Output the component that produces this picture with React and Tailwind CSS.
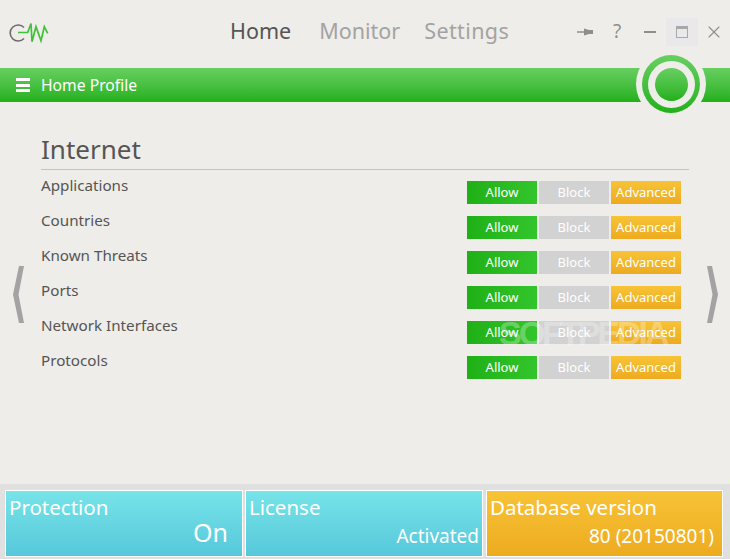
import { X } from "lucide-react";

const rows = [
  "Applications",
  "Countries",
  "Known Threats",
  "Ports",
  "Network Interfaces",
  "Protocols",
];

function Logo() {
  return (
    <svg width="40" height="22" viewBox="0 0 40 22" fill="none">
      <path d="M15 4.5A8 8 0 1 0 15 15.5" stroke="#6b6b6b" strokeWidth="1.6" />
      <path
        d="M9 9.5H18.7L22 0.5L23 18.7L27 3.7L32 17.7L35.3 3.7L38.7 10.3"
        stroke="#3fc23a"
        strokeWidth="1.7"
      />
    </svg>
  );
}

function Chevron({ flip }) {
  return (
    <svg width="12" height="57" viewBox="0 0 12 57" fill="none">
      <path
        d={flip ? "M1 0H6L12 28.5L6 57H1L6.5 28.5Z" : "M11 0H6L0 28.5L6 57H11L5.5 28.5Z"}
        fill="#a3a3a3"
      />
    </svg>
  );
}

function Card({ title, value, valueClass, color }) {
  return (
    <div className={`h-[67px] border border-white flex flex-col text-white ${color}`}>
      <div className="pl-[3px] pt-[3px] text-[20.5px] leading-[27px]">{title}</div>
      <div className={`mt-auto text-right ${valueClass}`}>{value}</div>
    </div>
  );
}

export default function App() {
  return (
    <div className="relative w-[730px] h-[559px] overflow-hidden flex flex-col bg-[#eeede9] font-['Noto_Sans',sans-serif]">
      <div className="h-[68px] flex items-center relative">
        <div className="ml-[9px] flex">
          <Logo />
        </div>
        <div className="ml-[181px] mt-[-6px] flex text-[21.5px] text-[#a3a3a3]">
          <span className="text-[#555555] mr-[28px]">Home</span>
          <span className="mr-[24px]">Monitor</span>
          <span className="tracking-[0.4px]">Settings</span>
        </div>
        <div className="ml-auto mr-[6px] mt-[-5px] flex items-center text-[#8e8e8e]">
          <svg width="17" height="10" viewBox="0 0 17 10" className="mr-[19px]">
            <path d="M0 4.3H7V5.7H0Z M7 1.5L12 3H16V7H12L7 8.5Z" fill="#8e8e8e" />
          </svg>
          <span className="w-[10px] text-[19px] leading-none mr-[21px]">?</span>
          <div className="w-[12px] h-[2px] bg-[#8e8e8e] mr-[10px]"></div>
          <div className="w-[32px] h-[28px] bg-[#e9e9ec] flex items-center justify-center mr-[6px]">
            <div className="w-[12px] h-[12px] border border-[#a8a8a8] border-t-[3px]"></div>
          </div>
          <X size={20} strokeWidth={1.3} />
        </div>
      </div>

      <div className="h-[34px] flex items-center bg-gradient-to-b from-[#66cf60] to-[#20b017] text-white">
        <div className="ml-[16px] mr-[11px] w-[14px] flex flex-col gap-[2.5px]">
          <div className="h-[3px] bg-white"></div>
          <div className="h-[3px] bg-white"></div>
          <div className="h-[3px] bg-white"></div>
        </div>
        <span className="text-[15.7px] pt-[1px]">Home Profile</span>
      </div>

      <div className="flex-1 flex">
        <div className="w-[41px] pl-[13px] pt-[164px]">
          <Chevron />
        </div>
        <div className="w-[648px] pt-[28px]">
          <div className="text-[26px] leading-[38px] h-[40px] text-[#555555] border-b border-[#c3c3cb]">
            Internet
          </div>
          <div className="flex flex-col gap-[12px] pt-[11px]">
            {rows.map((name) => (
              <div key={name} className="h-[23px] flex">
                <span className="text-[15.2px] leading-[8px] text-[#555555]">{name}</span>
                <div className="ml-auto mr-[8px] flex gap-[2px] text-[13px] leading-[23px] text-center text-white">
                  <div className="w-[70px] bg-gradient-to-r from-[#1fb016] to-[#33c52c]">Allow</div>
                  <div className="w-[70px] bg-[#d2d2d2]">Block</div>
                  <div className="w-[70px] bg-gradient-to-b from-[#f8c336] to-[#edab1f]">Advanced</div>
                </div>
              </div>
            ))}
          </div>
        </div>
        <div className="pl-[17px] pt-[164px]">
          <Chevron flip />
        </div>
      </div>

      <div className="h-[75px] bg-[#e0e0e0] pt-[6px] pl-[5px] grid grid-cols-[238px_238px_238px] gap-x-[2px]">
        <Card
          title="Protection"
          value="On"
          valueClass="text-[25px] leading-[22px] pr-[14px] pb-[13px]"
          color="bg-gradient-to-b from-[#76e4e8] to-[#57c8db]"
        />
        <Card
          title="License"
          value="Activated"
          valueClass="text-[19px] leading-[26px] pr-[3px] pb-[7px]"
          color="bg-gradient-to-b from-[#76e4e8] to-[#57c8db]"
        />
        <div className="ml-[1px]">
          <Card
            title="Database version"
            value="80 (20150801)"
            valueClass="text-[19px] leading-[26px] pr-[8px] pb-[7px]"
            color="bg-gradient-to-b from-[#f8c336] to-[#edab1f]"
          />
        </div>
      </div>

      {/* status ring sits over the green bar */}
      <div className="absolute left-[636px] top-[49px] w-[70px] h-[70px] rounded-full bg-[#eeede9] flex items-center justify-center">
        <div className="w-[58px] h-[58px] rounded-full bg-gradient-to-b from-[#66cf60] to-[#20b017] flex items-center justify-center">
          <div className="w-[47px] h-[47px] rounded-full bg-[#eeede9] flex items-center justify-center">
            <div className="w-[33px] h-[33px] rounded-full bg-gradient-to-b from-[#66cf60] to-[#20b017]"></div>
          </div>
        </div>
      </div>

      {/* watermark */}
      <div className="absolute left-[499px] top-[315px] text-[34px] leading-[36px] font-bold tracking-[-3px] text-white/30 font-['Liberation_Sans',sans-serif]">
        SOFTPEDIA
      </div>
    </div>
  );
}
